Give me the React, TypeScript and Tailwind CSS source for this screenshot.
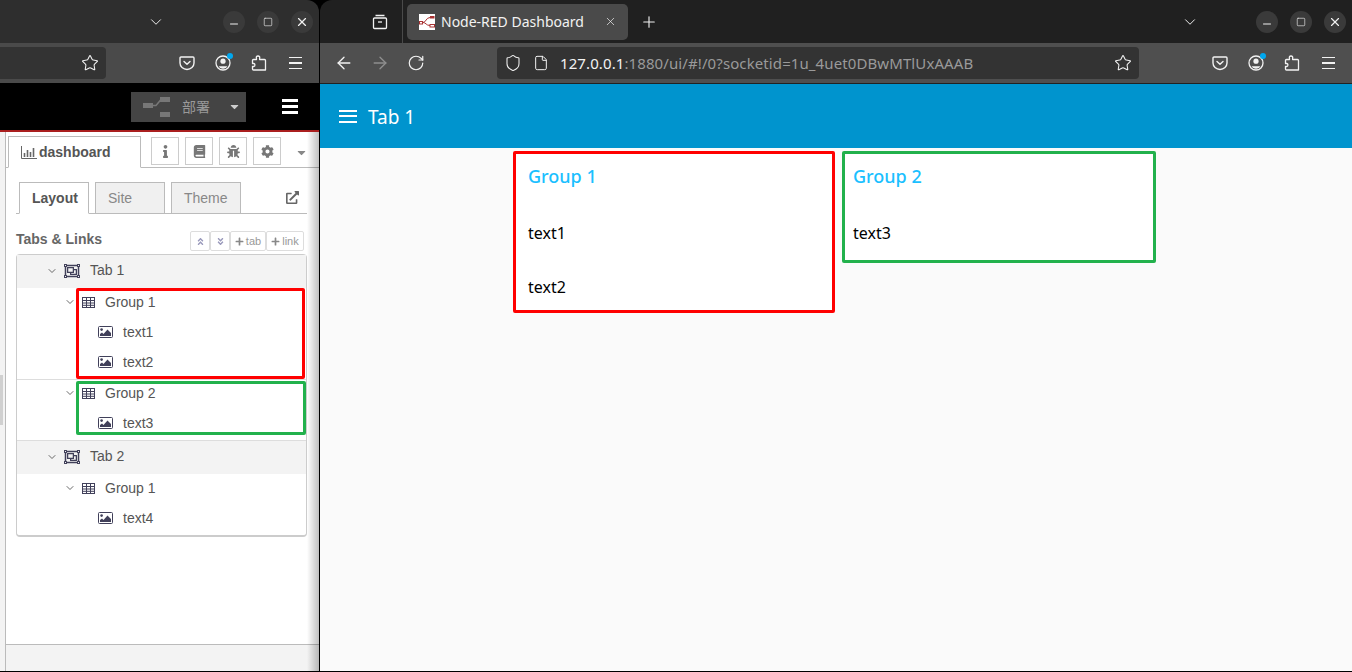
import React from 'react';
import { ArrowLeft, ArrowRight, ChevronDown, Minus, Plus, RotateCw, Shield, Square, Star, X, File } from 'lucide-react';
import { FaBook, FaBug, FaCog, FaInfo, FaPlus, FaAngleDoubleUp, FaAngleDoubleDown, FaRegObjectGroup, FaExternalLinkAlt, FaCaretDown } from 'react-icons/fa';

const sans = "font-['Liberation_Sans',Arial,sans-serif]";
const ui = "font-['Noto_Sans',sans-serif]";

const PocketIcon = () => (
    <svg width="16" height="16" viewBox="0 0 16 16" fill="none" stroke="#f2f2f2" strokeWidth="1.4">
        <path d="M2 2h12a1 1 0 0 1 1 1v5a7 6.5 0 0 1-14 0V3a1 1 0 0 1 1-1z" />
        <path d="M5 6.5 8 9.3l3-2.8" strokeLinecap="round" strokeLinejoin="round" />
    </svg>
);

const AccountIcon = () => (
    <div className="relative w-[16px] h-[16px]">
        <svg width="16" height="16" viewBox="0 0 16 16" fill="none">
            <circle cx="8" cy="8" r="7" stroke="#f2f2f2" strokeWidth="1.3" />
            <circle cx="8" cy="6.2" r="2.6" fill="#f2f2f2" />
            <path d="M3.6 11.2h8.8a5.2 5.2 0 0 1-8.8 0z" fill="#f2f2f2" />
        </svg>
        <div className="absolute -top-[2px] -right-[2px] w-[6px] h-[6px] rounded-full bg-[#00a8f0]" />
    </div>
);

const PuzzleIcon = () => (
    <svg width="16" height="16" viewBox="0 0 16 16" fill="none" stroke="#f2f2f2" strokeWidth="1.3" strokeLinejoin="round">
        <path d="M7 1c1.4 0 2 1 1.6 2.4V4.5h4.9a1 1 0 0 1 1 1V15H2.5a1 1 0 0 1-1-1v-2.5h1.2c1.6 0 1.6-3 0-3H1.5V5.5a1 1 0 0 1 1-1h3V3.4C5 2 5.6 1 7 1z" />
    </svg>
);

const FoxMenu = () => (
    <div className="flex flex-col gap-[4px] w-[13px]">
        <div className="h-[1.5px] bg-[#f2f2f2]" />
        <div className="h-[1.5px] bg-[#f2f2f2]" />
        <div className="h-[1.5px] bg-[#f2f2f2]" />
    </div>
);

const WindowButtons = () => (
    <div className="flex gap-[12px] text-[#f0f0f0]">
        <div className="w-[22px] h-[22px] rounded-full bg-[#3a3a3a] flex items-center justify-center"><Minus size={12} className="mt-[5px]" /></div>
        <div className="w-[22px] h-[22px] rounded-full bg-[#3a3a3a] flex items-center justify-center"><Square size={10} strokeWidth={1.5} /></div>
        <div className="w-[22px] h-[22px] rounded-full bg-[#3a3a3a] flex items-center justify-center"><X size={14} /></div>
    </div>
);

const ToolbarRight = () => (
    <div className="flex items-center text-[#f2f2f2]">
        <div className="w-[36px] flex justify-center"><PocketIcon /></div>
        <div className="w-[36px] flex justify-center"><AccountIcon /></div>
        <div className="w-[36px] flex justify-center"><PuzzleIcon /></div>
        <div className="w-[36px] flex justify-center"><FoxMenu /></div>
    </div>
);

const TableIcon = () => (
    <svg width="13" height="11" viewBox="0 0 13 11" fill="none" stroke="#41405a" strokeWidth="1">
        <rect x="0.5" y="0.5" width="12" height="10" />
        <path d="M0.5 3.5h12M0.5 6h12M0.5 8.3h12M4.5 0.5v10M8.5 0.5v10" />
    </svg>
);

const PictureIcon = () => (
    <svg width="15" height="12" viewBox="0 0 15 12" className="ml-[81px]">
        <rect x="0.5" y="0.5" width="14" height="11" rx="1" fill="none" stroke="#41405a" />
        <circle cx="3.6" cy="3.6" r="1.3" fill="#41405a" />
        <path d="M2 10V8l2-1.5L5.5 8 9.5 3.5 13 7v3z" fill="#41405a" />
    </svg>
);

const TabRow = ({ label }: { label: string }) => (
    <div className="h-[33px] bg-[#f3f3f3] flex items-center pb-[2px] text-[14px] text-[#555]">
        <ChevronDown size={12} strokeWidth={1.6} className="ml-[29px] text-[#444]" />
        <FaRegObjectGroup className="ml-[6px] text-[#41405a] text-[16px]" />
        <span className="ml-[10px]">{label}</span>
    </div>
);

const GroupRow = ({ label, height }: { label: string; height: string }) => (
    <div className={`${height} flex items-center text-[14px] text-[#555]`}>
        <ChevronDown size={12} strokeWidth={1.6} className="ml-[47px] text-[#444]" />
        <div className="ml-[6px]"><TableIcon /></div>
        <span className="ml-[10px]">{label}</span>
    </div>
);

const WidgetRow = ({ label }: { label: string }) => (
    <div className="h-[30px] flex items-center text-[14px] text-[#555]">
        <PictureIcon />
        <span className="ml-[10px]">{label}</span>
    </div>
);

const ToolButton = ({ children }: { children: React.ReactNode }) => (
    <div className="w-[28px] h-[28px] border border-[#ccc] bg-white flex items-center justify-center text-[#777] text-[13px]">{children}</div>
);

const SmallButton = ({ children, width }: { children: React.ReactNode; width: string }) => (
    <div className={`${width} h-[20px] border border-[#ddd] rounded-[2px] bg-white flex items-center justify-center gap-[2px] text-[11px] text-[#999]`}>{children}</div>
);

const LeftWindow = () => (
    <div className={`w-[319px] shrink-0 h-[671px] flex flex-col ${sans}`}>
        <div className="h-[43px] bg-[#2e2e2e] rounded-tr-[12px] flex items-center justify-end pr-[6px] text-[#f0f0f0]">
            <ChevronDown size={18} strokeWidth={1.3} className="mr-[58px]" />
            <WindowButtons />
        </div>
        <div className="h-[40px] bg-[#4a4a4a] flex items-center">
            <div className="w-[106px] h-[32px] bg-[#333] rounded-r-[4px] flex items-center justify-end pr-[7px] text-[#f2f2f2]">
                <Star size={18} strokeWidth={1.4} />
            </div>
            <div className="ml-[63px]"><ToolbarRight /></div>
        </div>
        <div className="h-[47px] bg-black flex items-center">
            <div className="ml-[131px] w-[115px] h-[30px] bg-[#444] flex items-center text-[#999]">
                <svg width="27" height="24" viewBox="0 0 27 24" className="ml-[12px]" fill="#777">
                    <rect x="0" y="8" width="10" height="5" />
                    <rect x="17" y="2" width="10" height="5" />
                    <rect x="17" y="17" width="10" height="5" />
                    <path d="M10 10.5h3l5-6" stroke="#777" strokeWidth="1.5" fill="none" />
                </svg>
                <span className="ml-[12px] text-[14px] font-['Noto_Sans_CJK_SC',sans-serif]">部署</span>
                <FaCaretDown className="ml-[18px] text-[#ccc] text-[13px]" />
            </div>
            <div className="ml-[36px] w-[16px] flex flex-col gap-[3px]">
                <div className="h-[3px] bg-white" />
                <div className="h-[3px] bg-white" />
                <div className="h-[3px] bg-white" />
            </div>
        </div>
        <div className="h-[2px] bg-[#aa1f1f]" />
        <div className="flex-1 flex bg-[#f3f3f3] min-h-0">
            <div className="w-[5px] shrink-0">
                <div className="mt-[243px] w-[3px] h-[50px] bg-[#d0d0d0]" />
            </div>
            <div className="relative flex-1 min-w-0 flex flex-col bg-white border-l border-[#bbb] min-h-0">
                <div className="h-[36px] flex items-end border-b border-[#bbb]">
                    <div className="ml-[2px] w-[133px] h-[32px] -mb-[1px] border border-[#bbb] border-b-white bg-white flex items-center pl-[12px] text-[14px] font-bold text-[#555]">
                        <svg width="16" height="13" viewBox="0 0 16 13" className="mr-[2px]" fill="none" stroke="#666">
                            <path d="M0.5 0v12.5H16" />
                            <path d="M3.5 11V7M6.5 11V4M9.5 11V6M12.5 11V2" strokeWidth="1.6" />
                        </svg>
                        dashboard
                    </div>
                    <div className="ml-[10px] mb-[2px] flex gap-[6px]">
                        <ToolButton><FaInfo /></ToolButton>
                        <ToolButton><FaBook /></ToolButton>
                        <ToolButton><FaBug /></ToolButton>
                        <ToolButton><FaCog /></ToolButton>
                    </div>
                    <FaCaretDown className="ml-[14px] mb-[8px] text-[#888] text-[13px]" />
                </div>
                <div className="flex-1 pl-[10px] min-h-0">
                    <div className="h-[46px] flex items-end border-b border-[#bbb] gap-[6px] pl-[3px] w-[291px] relative">
                        <div className="w-[70px] h-[32px] -mb-[1px] border border-[#bbb] border-b-white bg-white flex items-center pl-[12px] text-[14px] font-bold text-[#555]">Layout</div>
                        <div className="w-[70px] h-[31px] border border-[#bbb] border-b-0 bg-[#f0f0f0] flex items-center pl-[12px] text-[14px] text-[#888]">Site</div>
                        <div className="w-[70px] h-[31px] border border-[#bbb] border-b-0 bg-[#f0f0f0] flex items-center pl-[12px] text-[14px] text-[#888]">Theme</div>
                        <FaExternalLinkAlt className="absolute left-[270px] top-[23px] text-[#666] text-[13px]" />
                    </div>
                    <div className="mt-[3px] h-[34px] flex items-end justify-between w-[288px]">
                        <span className="text-[14px] font-bold text-[#666] mb-[1px]">Tabs &amp; Links</span>
                        <div className="flex">
                            <SmallButton width="w-[20px]"><FaAngleDoubleUp className="text-[9px] text-[#99b]" /></SmallButton>
                            <SmallButton width="w-[20px]"><FaAngleDoubleDown className="text-[9px] text-[#99b]" /></SmallButton>
                            <SmallButton width="w-[36px]"><FaPlus className="text-[9px] text-[#888]" />tab</SmallButton>
                            <SmallButton width="w-[38px]"><FaPlus className="text-[9px] text-[#888]" />link</SmallButton>
                        </div>
                    </div>
                    <div className="mt-[3px] w-[291px] border border-[#ccc] border-b-2 rounded-[4px]">
                        <TabRow label="Tab 1" />
                        <div className="relative h-[92px] border-b border-[#ddd]">
                            <GroupRow label="Group 1" height="h-[28px]" />
                            <div className="h-px" />
                            <WidgetRow label="text1" />
                            <WidgetRow label="text2" />
                            <div className="absolute left-[59px] top-0 w-[229px] h-[91px] border-[3px] border-[#ff0000] rounded-[2px]" />
                        </div>
                        <div className="relative h-[61px] border-b border-[#ddd]">
                            <GroupRow label="Group 2" height="h-[26px]" />
                            <div className="h-[2px]" />
                            <WidgetRow label="text3" />
                            <div className="absolute left-[59px] top-[1px] w-[230px] h-[54px] border-[3px] border-[#22b14c] rounded-[2px]" />
                        </div>
                        <TabRow label="Tab 2" />
                        <GroupRow label="Group 1" height="h-[28px]" />
                        <div className="h-px" />
                        <WidgetRow label="text4" />
                        <div className="h-[2px]" />
                    </div>
                </div>
                <div className="h-[27px] bg-[#f3f3f3] border-t border-[#bbb]" />
                <div className="absolute top-0 bottom-0 right-0 w-[12px] bg-gradient-to-r from-transparent to-black/25" />
            </div>
        </div>
    </div>
);

const DashCard = ({ title, items, className }: { title: string; items: string[]; className: string }) => (
    <div className={`${className} border-[3px] rounded-[2px] bg-white ${ui}`}>
        <div className="h-[44px] flex items-center text-[18px] font-medium text-[#1bbfff]">{title}</div>
        <div className="mt-[8px] flex flex-col">
            {items.map(item => (
                <div key={item} className="h-[54px] flex items-center text-[16px] text-black">{item}</div>
            ))}
        </div>
    </div>
);

const RightWindow = () => (
    <div className={`flex-1 min-w-0 h-[671px] flex flex-col ${ui}`}>
        <div className="h-[43px] bg-[#202020] rounded-tl-[12px] flex items-center text-[#f0f0f0]">
            <svg width="16" height="16" viewBox="0 0 16 16" fill="none" stroke="#f2f2f2" strokeWidth="1.3" className="ml-[52px]">
                <path d="M3.5 1.5h9M1.5 5a1 1 0 0 1 1-1h11a1 1 0 0 1 1 1v8.5a1 1 0 0 1-1 1h-11a1 1 0 0 1-1-1z" />
                <path d="M6 8h4" />
            </svg>
            <div className="ml-[14px] w-px h-[43px] bg-[#4a4a4a]" />
            <div className="ml-[4px] w-[221px] h-[36px] rounded-[5px] bg-[#4a4a4a] flex items-center pl-[12px]">
                <svg width="16" height="16" viewBox="0 0 16 16" className="shrink-0">
                    <rect width="16" height="16" fill="#fff" />
                    <rect x="0.5" y="7.5" width="3" height="2.5" fill="none" stroke="#a33" />
                    <rect x="11" y="2" width="4.5" height="2.5" fill="#a33" />
                    <rect x="11" y="10.5" width="4.5" height="2.5" fill="none" stroke="#a33" />
                    <path d="M4 8.5c3 0 3-5 7-5M4 8.5c3 0 3 3 7 3" stroke="#a33" fill="none" />
                </svg>
                <span className="ml-[6px] text-[14px] text-[#f2f2f2] whitespace-nowrap">Node-RED Dashboard</span>
                <X size={13} strokeWidth={1.3} className="ml-[20px]" />
            </div>
            <Plus size={18} strokeWidth={1.5} className="ml-[12px]" />
            <ChevronDown size={18} strokeWidth={1.3} className="ml-[523px]" />
            <div className="ml-[57px]"><WindowButtons /></div>
        </div>
        <div className="h-[41px] bg-[#4f4f4f] border-b border-[#222] flex items-center text-[#f2f2f2]">
            <ArrowLeft size={20} strokeWidth={1.6} className="ml-[14px]" />
            <ArrowRight size={20} strokeWidth={1.6} className="ml-[16px] text-[#8f8f8f]" />
            <RotateCw size={18} strokeWidth={1.6} className="ml-[17px]" />
            <div className="ml-[72px] w-[642px] h-[32px] rounded-[4px] bg-[#333] flex items-center">
                <Shield size={18} strokeWidth={1.4} className="ml-[7px]" />
                <File size={16} strokeWidth={1.5} className="ml-[11px]" />
                <span className="ml-[11px] text-[15px] tracking-[0.1px] whitespace-nowrap text-[#f2f2f2]">127.0.0.1<span className="text-[#9a9a9a]">:1880/ui/#!/0?socketid=1u_4uet0DBwMTlUxAAAB</span></span>
                <Star size={18} strokeWidth={1.4} className="ml-auto mr-[7px]" />
            </div>
            <div className="ml-[63px]"><ToolbarRight /></div>
        </div>
        <div className="h-[64px] bg-[#0094ce] flex items-center text-white">
            <div className="ml-[19px] w-[18px] flex flex-col gap-[3.5px]">
                <div className="h-[2px] bg-white" />
                <div className="h-[2px] bg-white" />
                <div className="h-[2px] bg-white" />
            </div>
            <span className="ml-[11px] mt-[2px] text-[19px]">Tab 1</span>
        </div>
        <div className="flex-1 bg-[#fafafa] pl-[193px] pt-[3px] flex items-start gap-[7px]">
            <DashCard title="Group 1" items={['text1', 'text2']} className="w-[322px] h-[162px] border-[#ff0000] pl-[12px]" />
            <DashCard title="Group 2" items={['text3']} className="w-[314px] h-[112px] border-[#22b14c] pl-[8px]" />
        </div>
    </div>
);

const App = () => {
    return (
        <div className="w-[1352px] h-[672px] bg-black flex items-start gap-[1px] overflow-hidden">
            <LeftWindow />
            <RightWindow />
        </div>
    );
};

export default App;
